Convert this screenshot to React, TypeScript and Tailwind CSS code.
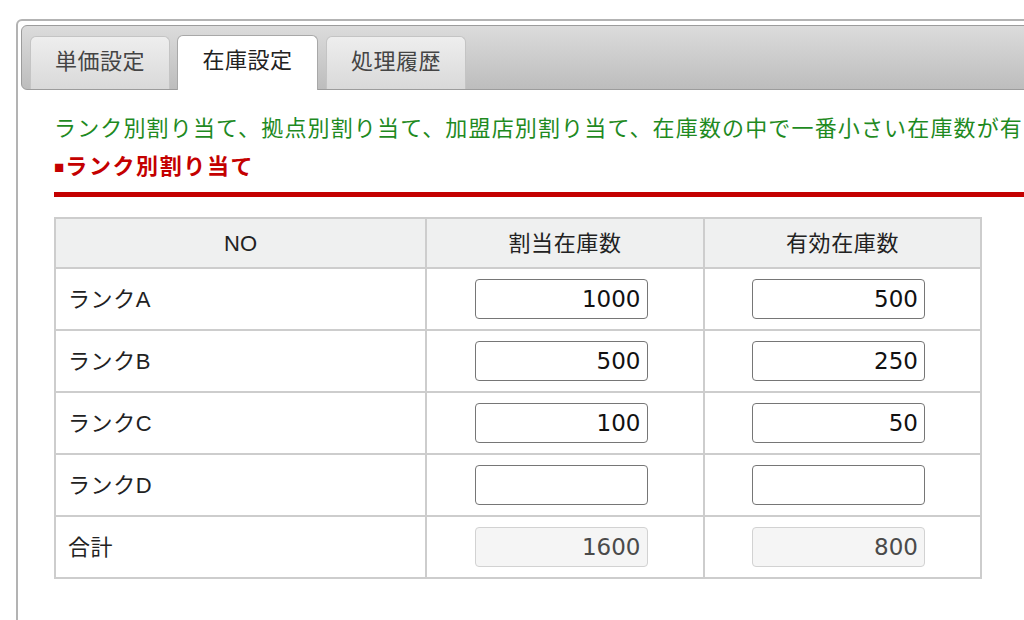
import React from "react";

const rows = [
  { name: "ランクA", a: "1000", b: "500" },
  { name: "ランクB", a: "500", b: "250" },
  { name: "ランクC", a: "100", b: "50" },
  { name: "ランクD", a: "", b: "" },
];

function Field({ value, disabled }: { value: string; disabled?: boolean }) {
  return (
    <input
      type="text"
      readOnly
      value={value}
      disabled={disabled}
      className={
        "w-[173px] h-[40px] rounded-[4px] border text-right pr-[6px] text-[23px] outline-none font-['DejaVu_Sans',sans-serif] " +
        (disabled
          ? "bg-[#f5f5f5] border-[#d2d2d2] text-[#4a4a4a]"
          : "bg-white border-[#767676] text-[#111]")
      }
    />
  );
}

export default function App() {
  return (
    <div className="w-[1024px] h-[620px] overflow-hidden bg-white font-['Liberation_Sans','Noto_Sans_CJK_JP',sans-serif]">
      <div className="ml-[16px] mt-[19px] w-[1120px] h-[700px] border-2 border-[#b3b3b3] rounded-tl-[6px] pt-[4px] pl-[3px]">
        {/* tab bar */}
        <div className="h-[65px] border border-[#9c9c9c] rounded-[6px] bg-gradient-to-b from-[#dcdcdc] to-[#bdbdbd] flex items-end pl-[8px] gap-[7px]">
          <div className="w-[140px] h-[53px] border border-b-0 border-[#c4c4c4] rounded-t-[6px] bg-gradient-to-b from-[#eeeeee] to-[#d9d9d9] flex items-center justify-center pb-[4px] text-[22px] tracking-[0.5px] text-[#444]">
            単価設定
          </div>
          <div className="w-[141px] h-[55px] -mb-px border border-b-0 border-[#a8a8a8] rounded-t-[6px] bg-white flex items-center justify-center pb-[6px] text-[22px] tracking-[0.5px] text-[#222]">
            在庫設定
          </div>
          <div className="w-[140px] h-[53px] ml-px border border-b-0 border-[#c4c4c4] rounded-t-[6px] bg-gradient-to-b from-[#eeeeee] to-[#d9d9d9] flex items-center justify-center pb-[4px] text-[22px] tracking-[0.5px] text-[#444]">
            処理履歴
          </div>
        </div>

        {/* content */}
        <div className="pl-[33px] pt-[20px]">
          <div className="whitespace-nowrap leading-[38px] text-[22px] tracking-[1.15px] text-[#1f8a1f]">
            ランク別割り当て、拠点別割り当て、加盟店別割り当て、在庫数の中で一番小さい在庫数が有
          </div>
          <div className="leading-[38px] pb-[5px] border-b-[5px] border-[#c40000] text-[22px] font-bold tracking-[1.6px] text-[#c40000] whitespace-nowrap">
            <span className="text-[17px] align-[1px] tracking-normal mr-[1px]">■</span>ランク別割り当て
          </div>

          <table className="mt-[20px] border-collapse table-fixed w-[926px] text-[22px] text-[#222]">
            <colgroup>
              <col className="w-[371px]" />
              <col className="w-[278px]" />
              <col className="w-[277px]" />
            </colgroup>
            <thead>
              <tr className="h-[50px] bg-[#eff0f0]">
                <th className="border-2 border-[#cdcdcd] font-normal text-center">NO</th>
                <th className="border-2 border-[#cdcdcd] font-normal text-center tracking-[0.6px]">割当在庫数</th>
                <th className="border-2 border-[#cdcdcd] font-normal text-center tracking-[0.6px]">有効在庫数</th>
              </tr>
            </thead>
            <tbody>
              {rows.map((r) => (
                <tr key={r.name} className="h-[62px]">
                  <td className="border-2 border-[#cdcdcd] pl-[12px] tracking-[0.6px]">{r.name}</td>
                  <td className="border-2 border-[#cdcdcd] text-center pr-[8px]">
                    <Field value={r.a} />
                  </td>
                  <td className="border-2 border-[#cdcdcd] text-center pr-[8px]">
                    <Field value={r.b} />
                  </td>
                </tr>
              ))}
              <tr className="h-[62px]">
                <td className="border-2 border-[#cdcdcd] pl-[12px] tracking-[0.6px]">合計</td>
                <td className="border-2 border-[#cdcdcd] text-center pr-[8px]">
                  <Field value="1600" disabled />
                </td>
                <td className="border-2 border-[#cdcdcd] text-center pr-[8px]">
                  <Field value="800" disabled />
                </td>
              </tr>
            </tbody>
          </table>
        </div>
      </div>
    </div>
  );
}
